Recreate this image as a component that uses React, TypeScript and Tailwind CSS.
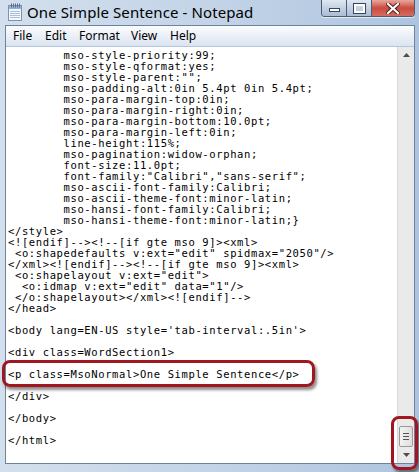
import React from "react";

const lines = [
  "        mso-style-priority:99;",
  "        mso-style-qformat:yes;",
  '        mso-style-parent:"";',
  "        mso-padding-alt:0in 5.4pt 0in 5.4pt;",
  "        mso-para-margin-top:0in;",
  "        mso-para-margin-right:0in;",
  "        mso-para-margin-bottom:10.0pt;",
  "        mso-para-margin-left:0in;",
  "        line-height:115%;",
  "        mso-pagination:widow-orphan;",
  "        font-size:11.0pt;",
  '        font-family:"Calibri","sans-serif";',
  "        mso-ascii-font-family:Calibri;",
  "        mso-ascii-theme-font:minor-latin;",
  "        mso-hansi-font-family:Calibri;",
  "        mso-hansi-theme-font:minor-latin;}",
  "</style>",
  "<![endif]--><!--[if gte mso 9]><xml>",
  ' <o:shapedefaults v:ext="edit" spidmax="2050"/>',
  "</xml><![endif]--><!--[if gte mso 9]><xml>",
  ' <o:shapelayout v:ext="edit">',
  '  <o:idmap v:ext="edit" data="1"/>',
  " </o:shapelayout></xml><![endif]-->",
  "</head>",
  "",
  "<body lang=EN-US style='tab-interval:.5in'>",
  "",
  "<div class=WordSection1>",
  "",
  "<p class=MsoNormal>One Simple Sentence</p>",
  "",
  "</div>",
  "",
  "</body>",
  "",
  "</html>",
];

const menus = [
  { label: "File", w: "w-[32px]" },
  { label: "Edit", w: "w-[34px]" },
  { label: "Format", w: "w-[52px]" },
  { label: "View", w: "w-[39px]" },
  { label: "Help", w: "w-[30px]" },
];

function NotepadIcon() {
  return (
    <svg width="18" height="18" viewBox="0 0 18 18">
      <rect x="2.5" y="2.5" width="13" height="15" fill="#f4f8fc" stroke="#7b93b0" />
      <rect x="3" y="3" width="12" height="3" fill="#8fb3dd" />
      {[5, 7, 9, 11, 13].map((x) => (
        <rect key={x} x={x} y="0.5" width="1" height="4" fill="#5a6f88" />
      ))}
      {[8.5, 10.5, 12.5, 14.5].map((y) => (
        <line key={y} x1="4" x2="14" y1={y} y2={y} stroke="#a9bfd8" strokeWidth="1" />
      ))}
    </svg>
  );
}

export default function App() {
  return (
    <div className="relative w-[419px] h-[472px] overflow-hidden flex flex-col bg-gradient-to-r from-[#d3dfec] via-[#c3d4e8] to-[#aec4de] font-['Noto_Sans',sans-serif]">
      {/* title bar */}
      <div className="h-[25px] flex items-start shrink-0">
        <div className="pl-[6px] pt-[3px]">
          <NotepadIcon />
        </div>
        <div className="ml-[3px] pt-[2px] text-[15px] leading-[20px] tracking-[0.1px] text-black">
          One Simple Sentence - Notepad
        </div>
        <div className="ml-auto mr-[4px] flex h-[17px] rounded-b-[4px] border border-t-0 border-[#4b5d74] overflow-hidden shadow-[0_1px_0_rgba(255,255,255,0.6)]">
          <div className="w-[25px] flex items-end justify-center pb-[4px] bg-gradient-to-b from-[#dfe8f2] via-[#c3d1e2] to-[#aabdd4] border-r border-[#4b5d74]">
            <div className="w-[11px] h-[4px] bg-white border border-[#3a4658]" />
          </div>
          <div className="w-[25px] flex items-center justify-center bg-gradient-to-b from-[#dfe8f2] via-[#c3d1e2] to-[#aabdd4] border-r border-[#4b5d74]">
            <div className="w-[11px] h-[9px] border-[2px] border-white outline outline-1 outline-[#3a4658]" />
          </div>
          <div className="w-[42px] flex items-center justify-center bg-gradient-to-b from-[#e8a79d] via-[#c94a3d] to-[#d46c5f]">
            <svg width="14" height="11" viewBox="0 0 14 11">
              <path d="M2 1 L12 10 M12 1 L2 10" stroke="#4a1d18" strokeWidth="4" strokeLinecap="square" />
              <path d="M2 1 L12 10 M12 1 L2 10" stroke="#ffffff" strokeWidth="2.2" strokeLinecap="square" />
            </svg>
          </div>
        </div>
      </div>

      {/* window body */}
      <div className="flex-1 flex flex-col ml-[5px] mr-[4px] mb-[8px] border border-[#6d829b]">
        <div className="h-[21px] shrink-0 flex items-center pl-[7px] bg-gradient-to-b from-[#fbfcfe] to-[#dae4f1] border-b border-[#b6c6da] text-[12px] text-black">
          {menus.map((m) => (
            <span key={m.label} className={m.w}>
              {m.label}
            </span>
          ))}
        </div>
        <div className="flex-1 flex min-h-0">
          <div className="flex-1 bg-white pl-[2px] pt-[3px] overflow-hidden font-['DejaVu_Sans_Mono',monospace] text-[10.5px] leading-[11px] tracking-[0.62px] text-black">
            {lines.map((l, i) => (
              <div key={i} className="whitespace-pre h-[11px]">
                {l}
              </div>
            ))}
          </div>
          <div className="w-[17px] flex flex-col bg-[#eaeaea] border-l border-[#d8d8d8]">
            <div className="h-[16px] flex items-center justify-center">
              <svg width="7" height="4" viewBox="0 0 7 4">
                <path d="M0 4 L3.5 0 L7 4 Z" fill="#4d4d4d" />
              </svg>
            </div>
            <div className="flex-1" />
            <div className="mx-[1px] h-[21px] rounded-[2px] border border-[#9a9a9a] bg-gradient-to-r from-[#f3f3f3] to-[#dedede] flex flex-col items-center justify-center gap-[2px]">
              {[0, 1, 2].map((k) => (
                <div key={k} className="w-[6px] h-[1px] bg-[#555]" />
              ))}
            </div>
            <div className="h-[16px] flex items-center justify-center">
              <svg width="7" height="4" viewBox="0 0 7 4">
                <path d="M0 0 L7 0 L3.5 4 Z" fill="#4d4d4d" />
              </svg>
            </div>
          </div>
        </div>
      </div>

      {/* highlight callouts */}
      <div className="absolute left-[2px] top-[360px] w-[313px] h-[27px] rounded-[8px] border-[3px] border-[#a0171f] shadow-[2px_3px_3px_rgba(0,0,0,0.45)]" />
      <div className="absolute left-[391px] top-[416px] w-[27px] h-[54px] rounded-[8px] border-[3px] border-[#a0171f] shadow-[2px_3px_3px_rgba(0,0,0,0.45)]" />
    </div>
  );
}
